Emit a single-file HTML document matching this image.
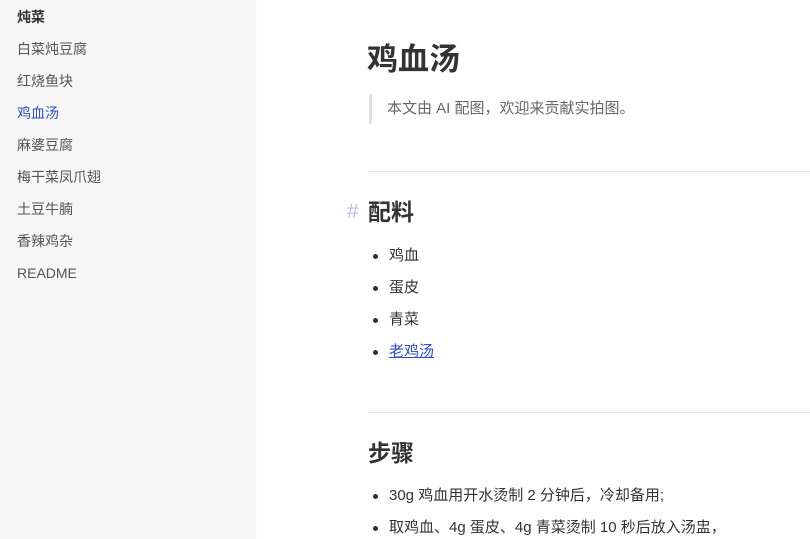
<!DOCTYPE html>
<html><head><meta charset="utf-8"><style>
*{margin:0;padding:0;box-sizing:border-box}
body{width:810px;height:539px;overflow:hidden;background:#fff;font-family:"Liberation Sans","Noto Sans CJK SC",sans-serif;color:#333;position:relative}
.side{position:absolute;left:0;top:0;width:257px;height:539px;background:#f6f6f6}
.side div{position:absolute;left:17px;font-size:14px;line-height:20px;color:#555}
.a{position:absolute;white-space:nowrap}
.li{position:absolute;left:389px;font-size:15px;line-height:20px;color:#333;white-space:nowrap}
.li:before{content:"";position:absolute;left:-16px;top:8px;width:5px;height:5px;border-radius:50%;background:#333}
.hr{position:absolute;left:368px;right:0;height:1px;background:#e4e4e4}
</style></head><body>
<div class="side">
<div style="top:7px;font-weight:bold;color:#333">炖菜</div>
<div style="top:39px">白菜炖豆腐</div>
<div style="top:71px">红烧鱼块</div>
<div style="top:103px;color:#2f4fbf">鸡血汤</div>
<div style="top:135px">麻婆豆腐</div>
<div style="top:167px">梅干菜凤爪翅</div>
<div style="top:199px">土豆牛腩</div>
<div style="top:231px">香辣鸡杂</div>
<div style="top:263px">README</div>
</div>
<div class="a" style="left:367px;top:40px;font-size:31px;line-height:40px;font-weight:bold;color:#333">鸡血汤</div>
<div class="a" style="left:369px;top:94px;width:3px;height:30px;background:#e2e2e2"></div>
<div class="a" style="left:387px;top:99px;font-size:15px;line-height:20px;color:#666">本文由 AI 配图，欢迎来贡献实拍图。</div>
<div class="hr" style="top:171px"></div>
<div class="a" style="left:347px;top:199px;font-size:21px;line-height:26px;color:#b4bfe3">#</div>
<div class="a" style="left:368px;top:198px;font-size:23px;line-height:28px;font-weight:bold;color:#333">配料</div>
<div class="li" style="top:246px">鸡血</div>
<div class="li" style="top:278px">蛋皮</div>
<div class="li" style="top:310px">青菜</div>
<div class="li" style="top:342px;color:#2f4fbf;text-decoration:underline">老鸡汤</div>
<div class="hr" style="top:412px"></div>
<div class="a" style="left:368px;top:439px;font-size:23px;line-height:28px;font-weight:bold;color:#333">步骤</div>
<div class="li" style="top:486px">30g 鸡血用开水烫制 2 分钟后，冷却备用;</div>
<div class="li" style="top:518px">取鸡血、4g 蛋皮、4g 青菜烫制 10 秒后放入汤盅，</div>
</body></html>
